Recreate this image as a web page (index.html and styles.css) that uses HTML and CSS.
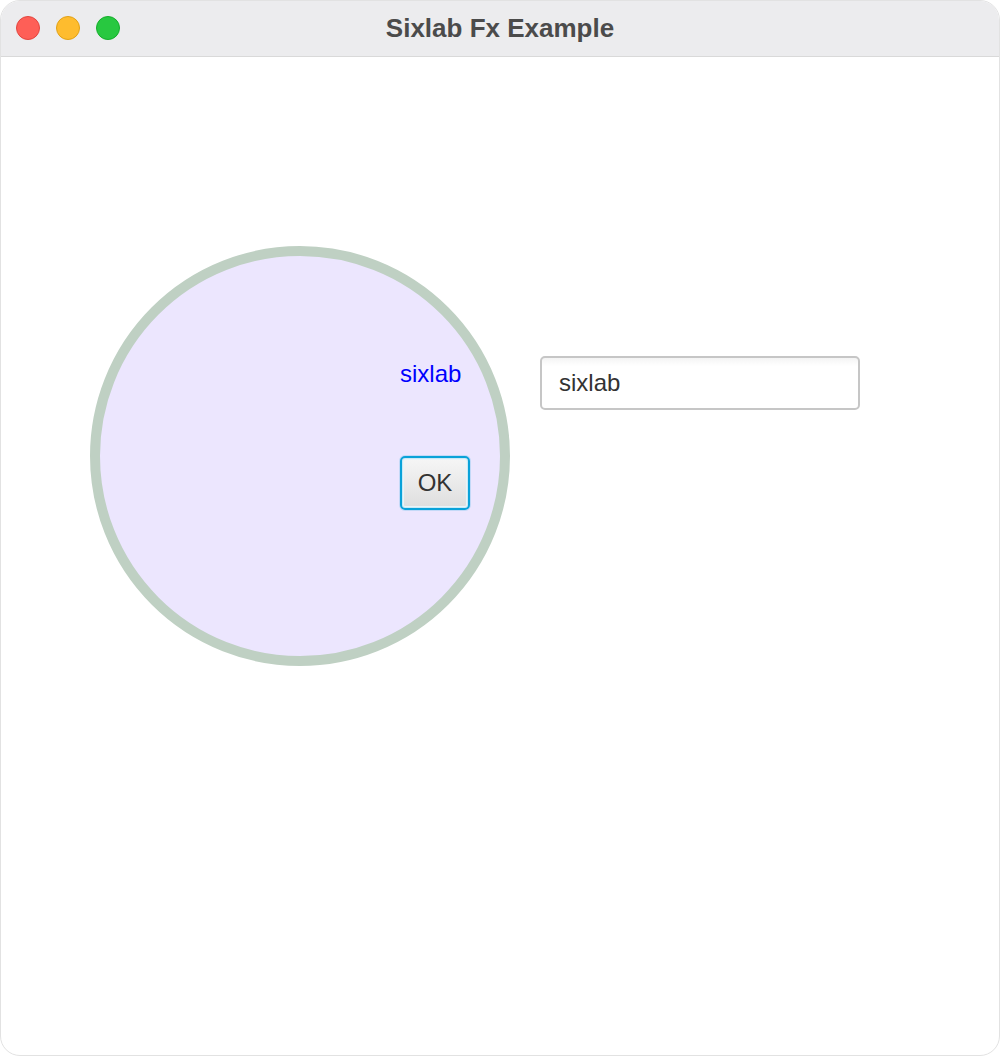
FILE: index.html
```html
<!DOCTYPE html>
<html>
<head>
<meta charset="utf-8">
<title>Sixlab Fx Example</title>
<link rel="stylesheet" href="styles.css">
</head>
<body>
<div class="window">
  <div class="titlebar">
    <div class="lights">
      <span class="light red"></span>
      <span class="light yellow"></span>
      <span class="light green"></span>
    </div>
    <div class="title">Sixlab Fx Example</div>
  </div>
  <div class="content">
    <div class="circle">
      <div class="inner">
        <div class="label">sixlab</div>
        <button class="ok">OK</button>
      </div>
    </div>
    <input class="field" type="text" value="sixlab">
  </div>
</div>
</body>
</html>
```
FILE: styles.css
```css
html, body {
  margin: 0;
  padding: 0;
  background: #ffffff;
}
.window {
  box-sizing: border-box;
  width: 1000px;
  height: 1056px;
  border: 1px solid #e2e2e2;
  border-radius: 20px;
  overflow: hidden;
  background: #ffffff;
  font-family: "Liberation Sans", Arial, sans-serif;
}
.titlebar {
  position: relative;
  height: 55px;
  background: #ececee;
  border-bottom: 1px solid #d9d9d9;
  display: flex;
  align-items: center;
  justify-content: center;
}
.lights {
  position: absolute;
  left: 15px;
  top: 15px;
  display: flex;
  gap: 16px;
}
.light {
  box-sizing: border-box;
  width: 24px;
  height: 24px;
  border-radius: 50%;
}
.red { background: #fe5f57; border: 1px solid #e2463f; }
.yellow { background: #febc2e; border: 1px solid #e1a116; }
.green { background: #28c840; border: 1px solid #14ae2a; }
.title {
  font-size: 26px;
  font-weight: bold;
  color: #4b4b4b;
  margin-top: -1px;
}
.content {
  display: flex;
  align-items: flex-start;
  padding-top: 189px;
  padding-left: 89px;
  gap: 30px;
}
.circle {
  box-sizing: border-box;
  width: 420px;
  height: 420px;
  border-radius: 50%;
  border: 10px solid #bfd0c3;
  background: #ece6fe;
  flex-shrink: 0;
}
.inner {
  display: flex;
  flex-direction: column;
  align-items: flex-start;
  padding-top: 104px;
  padding-left: 300px;
}
.label {
  font-size: 24px;
  line-height: 27px;
  color: #0000ff;
  height: 27px;
  margin-bottom: 69px;
}
.ok {
  box-sizing: border-box;
  width: 70px;
  height: 54px;
  padding: 0;
  border: 2px solid #09a2d9;
  border-radius: 5px;
  background: linear-gradient(#f6f6f6, #dedede);
  box-shadow: inset 0 0 0 1px #c9e9f5, inset 0 0 0 2px #e9f4f8, 0 0 0 1px rgba(9,162,217,0.18);
  font-family: "Liberation Sans", Arial, sans-serif;
  font-size: 24px;
  color: #333333;
}
.field {
  box-sizing: border-box;
  width: 320px;
  height: 54px;
  margin-top: 110px;
  border: 2px solid #c6c6c6;
  border-radius: 5px;
  padding: 0 0 0 17px;
  background: linear-gradient(#f4f4f4, #ffffff 8px);
  font-family: "Liberation Sans", Arial, sans-serif;
  font-size: 24px;
  color: #333333;
  outline: none;
}
```
